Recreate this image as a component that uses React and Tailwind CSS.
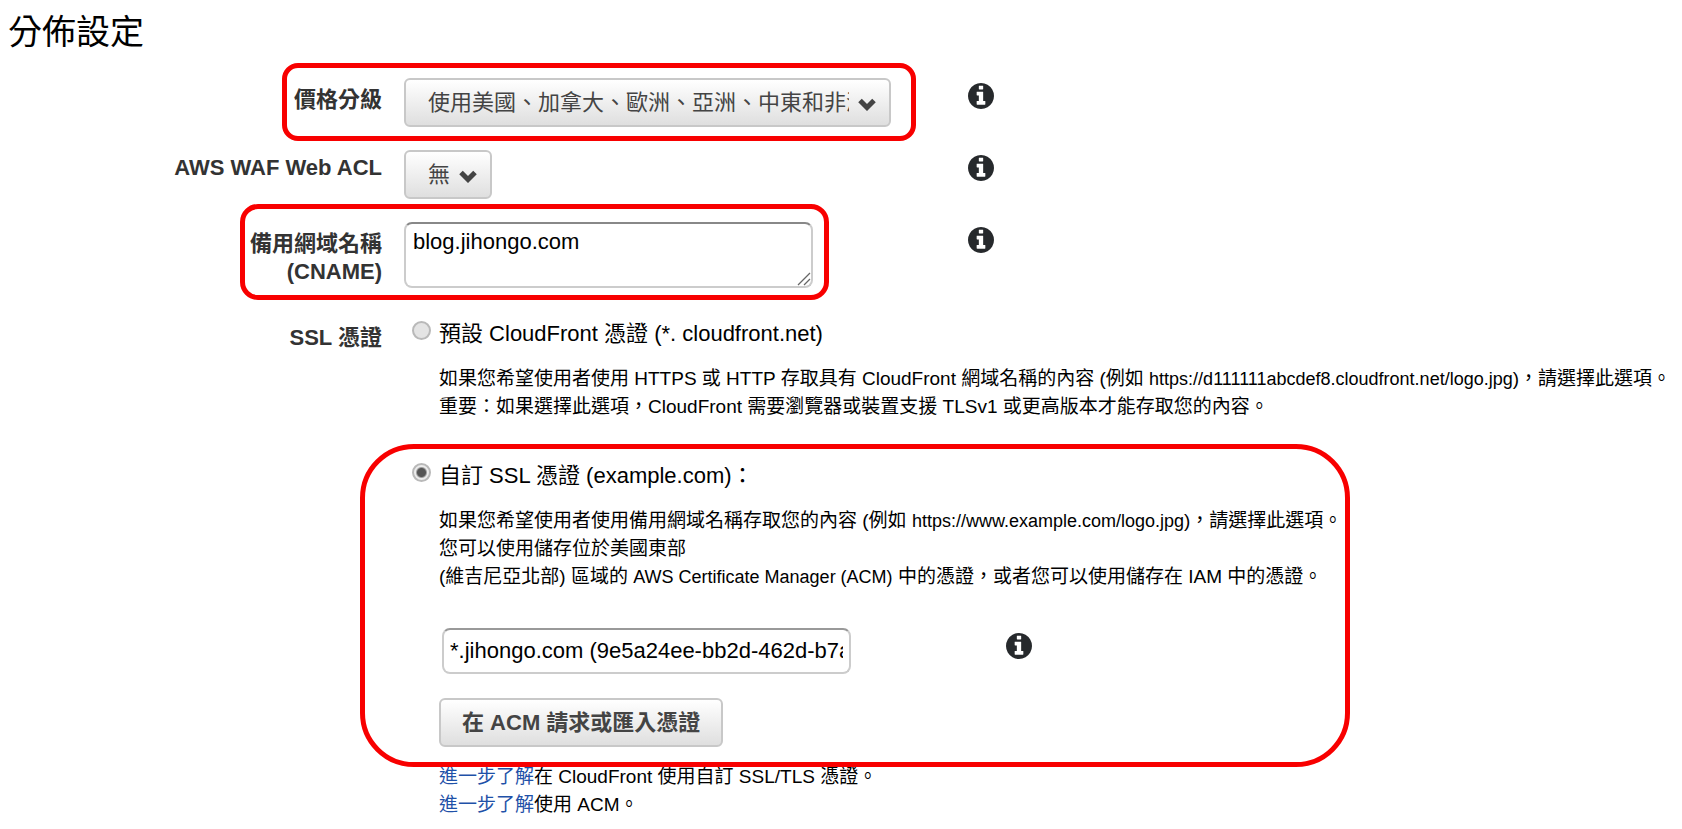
import { useState } from 'react'

function InfoButton({ label }) {
  return (
    <button type="button" aria-label={label} className="mt-[5px] shrink-0 self-start text-[#26292c]">
      <svg viewBox="0 128 1536 1536" className="size-[26px]" fill="currentColor">
        <path d="M1024 1376v-160q0-14-9-23t-23-9h-96v-512q0-14-9-23t-23-9h-320q-14 0-23 9t-9 23v160q0 14 9 23t23 9h96v320h-96q-14 0-23 9t-9 23v160q0 14 9 23t23 9h448q14 0 23-9t9-23zm-128-896v-160q0-14-9-23t-23-9h-192q-14 0-23 9t-9 23v160q0 14 9 23t23 9h192q14 0 23-9t9-23zm640 416q0 209-103 385.5t-279.5 279.5-385.5 103-385.5-103-279.5-279.5-103-385.5 103-385.5 279.5-279.5 385.5-103 385.5 103 279.5 279.5 103 385.5z" />
      </svg>
    </button>
  )
}

// Red rounded outline drawn over the part of the form to look at
function Highlight({ className }) {
  return <div className={`pointer-events-none absolute border-5 border-[#f80000] ${className}`} />
}

function Row({ label, htmlFor, className = '', children }) {
  return (
    <div className={`relative flex gap-[22px] ${className}`}>
      <label htmlFor={htmlFor} className="w-[382px] shrink-0 whitespace-pre-line text-right font-bold text-[#333]">
        {label}
      </label>
      <div className="min-w-0 flex-1">{children}</div>
    </div>
  )
}

function SelectBox({ id, options, className }) {
  return (
    <div className={`relative ${className}`}>
      <select
        id={id}
        className="h-[49px] w-full appearance-none rounded-md border-2 border-[#c8c8c8] bg-linear-to-b from-white to-[#dfdfdf] pl-[22px] pr-10 text-[#444]"
      >
        {options.map((option) => (
          <option key={option}>{option}</option>
        ))}
      </select>
      <svg
        viewBox="0 0 18 13"
        className="pointer-events-none absolute right-[15px] top-5 h-[13px] w-[18px] text-[#444]"
        fill="none"
        stroke="currentColor"
        strokeWidth="5"
      >
        <path d="M2 2.5l7 7 7-7" />
      </svg>
    </div>
  )
}

function RadioOption({ id, checked, onChange, children }) {
  return (
    <div className="flex items-center gap-2">
      <input
        type="radio"
        id={id}
        name="ssl"
        checked={checked}
        onChange={onChange}
        className="mb-2 ml-2 size-[19px] shrink-0 appearance-none rounded-full border-2 border-[#b9b9b9] bg-[#e4e4e4] checked:bg-[radial-gradient(circle,#555_0_4px,#ececec_6px)]"
      />
      <label htmlFor={id}>{children}</label>
    </div>
  )
}

export default function App() {
  const [ssl, setSsl] = useState('custom')

  return (
    <main className="overflow-x-hidden bg-white pb-2 font-['Liberation_Sans','Noto_Sans_CJK_TC',sans-serif] text-[22px] leading-7 text-black">
      <h1 className="px-2 pt-2 text-[34px] leading-[48px]">分佈設定</h1>

      <form className="pt-[22px]" onSubmit={(e) => e.preventDefault()}>
        <Row htmlFor="price" label={<span className="block pt-2">價格分級</span>}>
          <div className="flex gap-[77px]">
            <SelectBox id="price" className="w-[487px]" options={['使用美國、加拿大、歐洲、亞洲、中東和非洲']} />
            <InfoButton label="價格分級說明" />
          </div>
          <Highlight className="-top-[15px] left-[282px] h-[78px] w-[634px] rounded-2xl" />
        </Row>

        <Row htmlFor="waf" className="mt-[23px]" label={<span className="block pt-1">AWS WAF Web ACL</span>}>
          <div className="flex gap-[476px]">
            <SelectBox id="waf" className="w-[88px]" options={['無']} />
            <InfoButton label="AWS WAF 說明" />
          </div>
        </Row>

        <Row
          htmlFor="cname"
          className="mt-[23px]"
          label={<span className="block pt-2">{'備用網域名稱\n(CNAME)'}</span>}
        >
          <div className="flex gap-[155px]">
            <div className="relative">
              <textarea
                id="cname"
                defaultValue="blog.jihongo.com"
                className="block h-[66px] w-[409px] resize-none rounded-lg border-2 border-[#ccc] border-t-[#888] px-[7px] py-1"
              />
              {/* resize grip */}
              <svg
                viewBox="0 0 14 14"
                className="pointer-events-none absolute bottom-0.5 right-0.5 size-3.5"
                fill="none"
                stroke="#666"
                strokeWidth="1.3"
              >
                <path d="M1 13L13 1M7 13l6-6" />
              </svg>
            </div>
            <InfoButton label="備用網域名稱說明" />
          </div>
          <Highlight className="-top-[18px] left-[240px] h-[96px] w-[589px] rounded-[18px]" />
        </Row>

        <Row className="mt-8" label={<span className="block pt-1">SSL 憑證</span>}>
          <RadioOption id="ssl-default" checked={ssl === 'default'} onChange={() => setSsl('default')}>
            預設 CloudFront 憑證 (*. cloudfront.net)
          </RadioOption>
          <p className="mt-[17px] whitespace-nowrap pl-[35px] text-[19px]">
            如果您希望使用者使用 HTTPS 或 HTTP 存取具有 CloudFront 網域名稱的內容 (例如{' '}
            <span className="text-[18px]">https://d111111abcdef8.cloudfront.net/logo.jpg</span>)，請選擇此選項。
            <br />
            重要：如果選擇此選項，CloudFront 需要瀏覽器或裝置支援 TLSv1 或更高版本才能存取您的內容。
          </p>

          <div className="relative mt-[41px]">
            <RadioOption id="ssl-custom" checked={ssl === 'custom'} onChange={() => setSsl('custom')}>
              自訂 SSL 憑證 (example.com)：
            </RadioOption>
            <div className="pl-[35px]">
              <p className="mt-[17px] whitespace-nowrap text-[19px]">
                如果您希望使用者使用備用網域名稱存取您的內容 (例如{' '}
                <span className="text-[18px]">https://www.example.com/logo.jpg</span>)，請選擇此選項。
                <br />
                您可以使用儲存位於美國東部
                <br />
                (維吉尼亞北部) 區域的 <span className="text-[18px]">AWS Certificate Manager (ACM)</span>{' '}
                中的憑證，或者您可以使用儲存在 IAM 中的憑證。
              </p>
              <div className="mt-[37px] flex gap-[155px] pl-[3px]">
                <input
                  type="text"
                  aria-label="SSL 憑證"
                  defaultValue="*.jihongo.com (9e5a24ee-bb2d-462d-b7a1)"
                  className="h-[46px] w-[409px] rounded-lg border-2 border-[#ccc] border-t-[#999] px-1.5"
                />
                <InfoButton label="SSL 憑證說明" />
              </div>
              <button
                type="button"
                className="mt-6 h-[49px] rounded-md border-2 border-[#c8c8c8] bg-linear-to-b from-white to-[#dfdfdf] px-[21px] font-bold text-[#444]"
              >
                在 ACM 請求或匯入憑證
              </button>
            </div>
            <Highlight className="-left-11 -top-[18px] h-[323px] w-[990px] rounded-[54px]" />
          </div>

          <p className="mt-4 pl-[35px] text-[19px]">
            <a href="#ssl" className="text-[#1f51a8]">進一步了解</a>在 CloudFront 使用自訂 SSL/TLS 憑證。
            <br />
            <a href="#acm" className="text-[#1f51a8]">進一步了解</a>使用 ACM。
          </p>
        </Row>
      </form>
    </main>
  )
}
